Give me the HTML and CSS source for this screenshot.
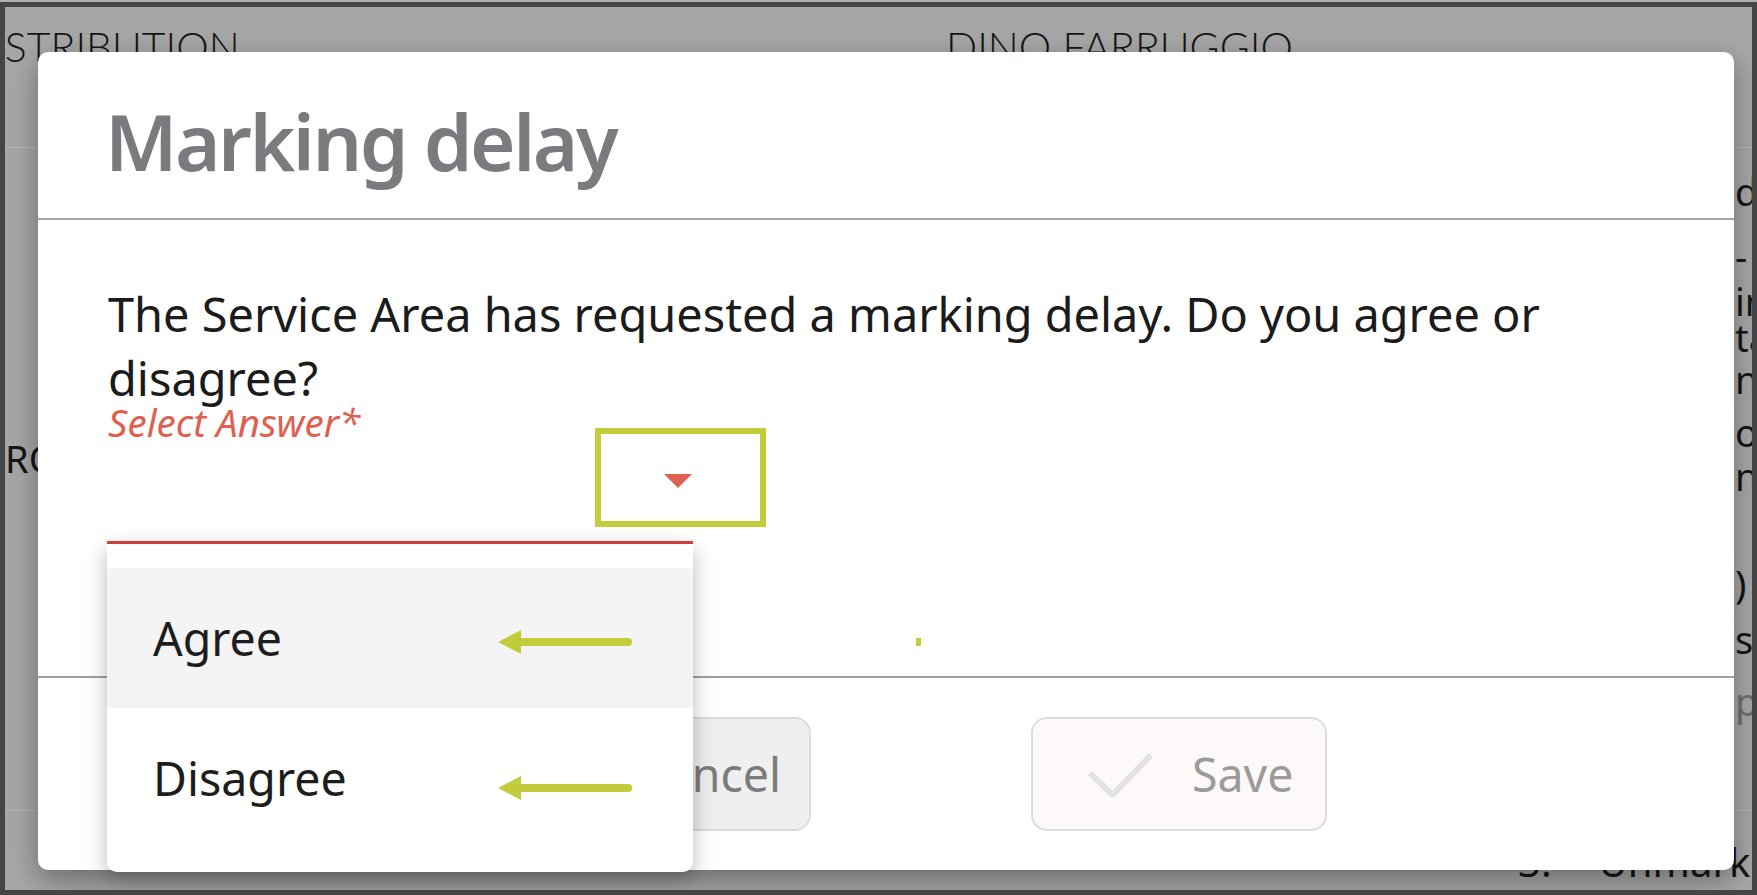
FILE: index.html
```html
<!DOCTYPE html>
<html lang="en">
<head>
<meta charset="utf-8">
<title>Marking delay</title>
<link rel="stylesheet" href="styles.css">
</head>
<body>
<div class="frame">
  <div class="page">
    <div class="page-head">
      <span class="ph-dist">DISTRIBUTION</span>
      <span class="ph-name">DINO FARRUGGIO</span>
    </div>
    <div class="page-body">
      <div class="pcol-left"><span>ROUTE</span></div>
      <div class="pcol-right">
        <div class="pr">d</div>
        <div class="pr">-</div>
        <div class="pr">in</div>
        <div class="pr">ta</div>
        <div class="pr">ne</div>
        <div class="pr">o</div>
        <div class="pr">n</div>
        <div class="pr">)</div>
        <div class="pr">s/</div>
        <div class="pr muted">p</div>
      </div>
    </div>
    <div class="page-foot"><span>3.</span><span>Unmarked</span></div>
  </div>

  <div class="modal">
    <div class="modal-head"><h1 class="modal-title">Marking delay</h1></div>
    <div class="modal-body">
      <p class="question">The Service Area has requested a marking delay. Do you agree or disagree?</p>
      <div class="select">
        <div class="select-label">Select Answer*</div>
        <div class="select-control">
          <svg class="caret" width="28" height="14" viewBox="0 0 28 14"><polygon points="0,0 28,0 14,14" fill="#e0604f"/></svg>
        </div>
        <div class="annot-box"></div>
        <ul class="menu">
          <li class="menu-item is-active">Agree
            <svg class="annot-arrow arrow-1" width="134" height="24" viewBox="0 0 134 24"><line x1="22" y1="12" x2="130" y2="12" stroke="#c2cc3a" stroke-width="8" stroke-linecap="round"/><polygon points="0,12 23,0 23,24" fill="#c2cc3a"/></svg>
          </li>
          <li class="menu-item">Disagree
            <svg class="annot-arrow arrow-2" width="134" height="24" viewBox="0 0 134 24"><line x1="22" y1="12" x2="130" y2="12" stroke="#c2cc3a" stroke-width="8" stroke-linecap="round"/><polygon points="0,12 23,0 23,24" fill="#c2cc3a"/></svg>
          </li>
        </ul>
      </div>
    </div>
    <div class="modal-foot">
      <button class="btn btn-cancel">
        <svg class="btn-icon" width="40" height="40" viewBox="0 0 40 40"><path d="M4 4 L36 36 M36 4 L4 36" stroke="#c8c8c8" stroke-width="6" fill="none"/></svg>
        <span>Cancel</span>
      </button>
      <button class="btn btn-save">
        <svg class="btn-icon" width="64" height="46" viewBox="0 0 64 46"><polyline points="2,22 24.5,44 63,4" stroke="#e2e2e2" stroke-width="6" fill="none"/></svg>
        <span>Save</span>
      </button>
    </div>
    <span class="annot-dot"></span>
  </div>
</div>
</body>
</html>
```
FILE: styles.css
```css
html, body {
  margin: 0;
  padding: 0;
}
body {
  width: 1757px;
  height: 895px;
  overflow: hidden;
  background: #b0b0b0;
}
.frame {
  position: relative;
  margin-top: 2px;
  height: 893px;
  box-sizing: border-box;
  border: 5px solid #454545;
  background: #a6a6a6;
  overflow: hidden;
  font-family: "Noto Sans", "Open Sans", sans-serif;
}

/* background page */
.page {
  height: 100%;
  display: flex;
  flex-direction: column;
  color: #151515;
}
.page-head {
  height: 141px;
  box-sizing: border-box;
  border-bottom: 1px solid #b6b6b6;
  display: grid;
  grid-template-columns: 941px 1fr;
  align-items: start;
  padding-top: 15px;
  font-family: Lato, "Liberation Sans", sans-serif;
  font-weight: 300;
  font-size: 41px;
  line-height: 49px;
  white-space: nowrap;
}
.ph-dist {
  margin-left: -42px;
}
.page-body {
  flex: 1;
  display: flex;
  justify-content: space-between;
}
.pcol-left {
  padding-top: 283.5px;
  font-size: 38px;
  line-height: 52px;
  white-space: nowrap;
}
.pcol-right {
  width: 17px;
  padding-top: 22.5px;
  font-size: 38px;
  line-height: 40px;
  white-space: nowrap;
}
.pr:nth-child(2) { margin-top: 25px; }
.pr:nth-child(3) { margin-top: 5px; }
.pr:nth-child(4) { margin-top: -4px; }
.pr:nth-child(5) { margin-top: 2.5px; }
.pr:nth-child(6) { margin-top: 12.7px; }
.pr:nth-child(7) { margin-top: 4.8px; }
.pr:nth-child(8) { margin-top: 66.5px; }
.pr:nth-child(9) { margin-top: 16px; }
.pr:nth-child(10) { margin-top: 21.6px; }
.muted {
  color: #6e6e6e;
}
.page-foot {
  height: 80px;
  box-sizing: border-box;
  border-top: 1px solid #b6b6b6;
  padding: 23px 0 0 1513px;
  display: flex;
  gap: 47px;
  font-size: 40px;
  line-height: 56px;
  white-space: nowrap;
}

/* modal */
.modal {
  position: absolute;
  left: 33px;
  top: 45px;
  width: 1696px;
  height: 818px;
  background: #fff;
  border-radius: 10px;
  box-shadow: 0 10px 28px rgba(0, 0, 0, 0.35);
  display: flex;
  flex-direction: column;
  z-index: 2;
}
.modal-head {
  height: 168px;
  box-sizing: border-box;
  padding: 50px 0 0 67px;
  border-bottom: 2px solid #a4a4a4;
}
.modal-title {
  margin: 0;
  font-size: 78px;
  line-height: 78px;
  font-weight: 600;
  letter-spacing: -2.5px;
  color: #7a7b7f;
}
.modal-body {
  flex: 1;
  padding: 62px 0 0 70px;
}
.question {
  margin: 0;
  max-width: 1480px;
  font-size: 46.9px;
  line-height: 64px;
  color: #1b1b1b;
}

/* select */
.select {
  position: relative;
  width: 586px;
  margin-top: -12px;
  margin-left: -1px;
}
.select-label {
  padding-left: 1px;
  font-style: italic;
  font-size: 38.5px;
  line-height: 49px;
  color: #e0604f;
}
.select-control {
  height: 67px;
  padding-top: 27px;
  border-bottom: 3px solid #d9443a;
  display: flex;
  justify-content: flex-end;
  align-items: flex-start;
}
.caret {
  display: block;
  margin-right: 1px;
}
.annot-box {
  position: absolute;
  left: 488px;
  top: 30px;
  width: 171px;
  height: 99px;
  box-sizing: border-box;
  border: 6px solid #c3cd3b;
}
.menu {
  position: absolute;
  top: 100%;
  left: 0;
  width: 586px;
  margin: 0;
  padding: 24px 0;
  list-style: none;
  background: #fff;
  border-radius: 0 0 10px 10px;
  box-shadow: 0 6px 22px rgba(0, 0, 0, 0.28);
  z-index: 3;
}
.menu-item {
  position: relative;
  height: 140px;
  line-height: 140px;
  padding-left: 46px;
  font-size: 46.5px;
  color: #1d1d1d;
}
.menu-item.is-active {
  background: #f4f4f4;
}
.annot-arrow {
  position: absolute;
  left: 391px;
}
.arrow-1 {
  top: 62px;
}
.arrow-2 {
  top: 68px;
}

/* footer */
.modal-foot {
  height: 194px;
  box-sizing: border-box;
  border-top: 2px solid #a0a0a0;
  padding: 39px 0 0 477px;
  display: flex;
  align-items: flex-start;
  gap: 220px;
}
.btn {
  height: 114px;
  width: 296px;
  box-sizing: border-box;
  border: 2px solid #dcdcdc;
  border-radius: 16px;
  display: flex;
  align-items: center;
  font-family: inherit;
  font-size: 46.5px;
  padding: 0;
  margin: 0;
}
.btn-icon {
  display: block;
  flex: none;
}
.btn-cancel {
  background: #efefef;
  color: #7b7b7b;
  justify-content: flex-end;
  gap: 30px;
  padding-right: 28px;
}
.btn-save {
  background: #fdf9f8;
  color: #9b9b9b;
  padding-left: 55px;
  gap: 40px;
}
.annot-dot {
  position: absolute;
  left: 878px;
  top: 586px;
  width: 5px;
  height: 8px;
  background: #c3cd3b;
}
```
